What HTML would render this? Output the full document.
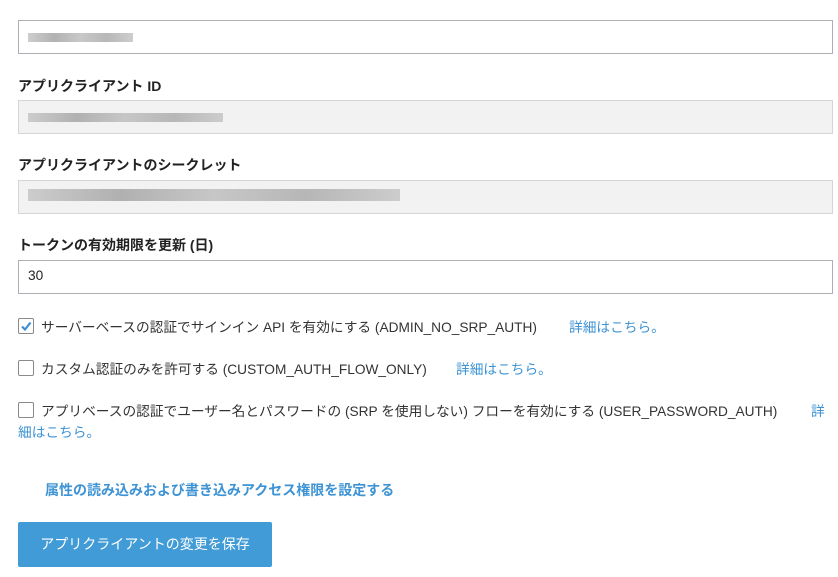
<!DOCTYPE html>
<html><head><meta charset="utf-8"><style>
body{margin:0;width:838px;height:577px;background:#fff;font-family:"Liberation Sans","Noto Sans CJK JP",sans-serif;color:#222;position:relative;overflow:hidden}
.a{position:absolute}
.in{position:absolute;left:18px;width:813px;height:32px;border:1px solid #aab0b3;box-sizing:content-box}
.ro{background:#f2f2f2;border-color:#d5d5d5}
.lbl{position:absolute;left:18px;font-weight:bold;font-size:14px}
.blur{position:absolute;height:9px;background:linear-gradient(90deg,#c8c8c8,#a9a9a9,#c2c2c2,#b0b0b0,#c8c8c8);opacity:.9}
.cb{position:absolute;left:18px;width:14px;height:14px;border:1px solid #8a8a8a;border-radius:2px;background:#fff}
.t{position:absolute;font-size:13.7px;color:#333;white-space:nowrap}
.lk{color:#3d93d4}
</style></head><body>
<div class="in" style="top:20px"></div>
<div class="blur" style="left:28px;top:33px;width:105px"></div>
<div class="lbl" style="top:76px">アプリクライアント ID</div>
<div class="in ro" style="top:100px"></div>
<div class="blur" style="left:28px;top:113px;width:195px"></div>
<div class="lbl" style="top:155px">アプリクライアントのシークレット</div>
<div class="in ro" style="top:180px"></div>
<div class="blur" style="left:28px;top:189px;width:372px;height:12px"></div>
<div class="lbl" style="top:235px">トークンの有効期限を更新 (日)</div>
<div class="in" style="top:260px"></div>
<div class="t" style="left:28px;top:268px;color:#222">30</div>
<div class="cb" style="top:318px"><svg width="14" height="14" viewBox="0 0 14 14" style="position:absolute;left:0;top:0"><path d="M3 7.5L6 10.5L11.5 3.5" stroke="#3d8fd1" stroke-width="2.2" fill="none"/></svg></div>
<div class="t" style="left:41px;top:316px">サーバーベースの認証でサインイン API を有効にする (ADMIN_NO_SRP_AUTH)</div>
<div class="t lk" style="left:569px;top:316px">詳細はこちら。</div>
<div class="cb" style="top:360px"></div>
<div class="t" style="left:41px;top:358px">カスタム認証のみを許可する (CUSTOM_AUTH_FLOW_ONLY)</div>
<div class="t lk" style="left:456px;top:358px">詳細はこちら。</div>
<div class="cb" style="top:402px"></div>
<div class="t" style="left:41px;top:400px">アプリベースの認証でユーザー名とパスワードの (SRP を使用しない) フローを有効にする (USER_PASSWORD_AUTH)</div>
<div class="t lk" style="left:811px;top:400px">詳</div>
<div class="t lk" style="left:18px;top:421px">細はこちら。</div>
<div class="t lk" style="left:45px;top:480px;font-weight:bold;font-size:14px">属性の読み込みおよび書き込みアクセス権限を設定する</div>
<div class="a" style="left:18px;top:522px;width:254px;height:45px;background:#419bd6;border-radius:2px;color:#fff;font-size:14px;line-height:44px;text-align:center">アプリクライアントの変更を保存</div>
</body></html>
